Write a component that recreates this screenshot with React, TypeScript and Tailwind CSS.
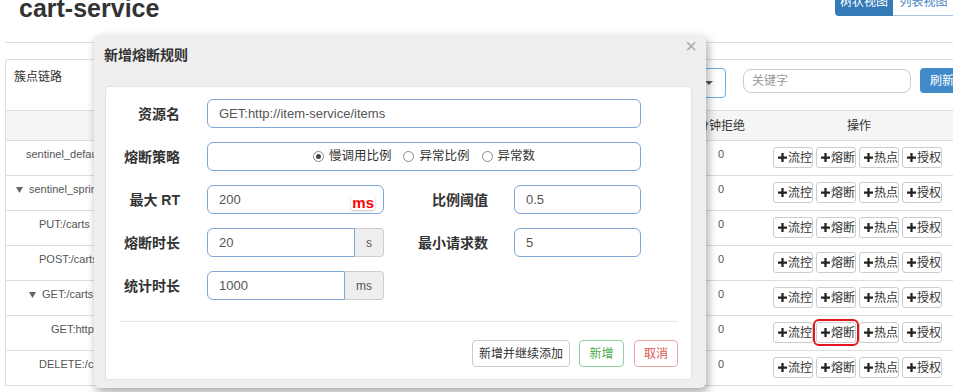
import React from 'react';

type TreeRow = { name: string; indent: string; caret?: boolean; marked?: boolean };

const rows: TreeRow[] = [
  { name: 'sentinel_default_context', indent: 'pl-[20px]' },
  { name: 'sentinel_spring_web_context', indent: 'pl-[10px]', caret: true },
  { name: 'PUT:/carts', indent: 'pl-[33px]' },
  { name: 'POST:/carts', indent: 'pl-[33px]' },
  { name: 'GET:/carts', indent: 'pl-[23px]', caret: true },
  { name: 'GET:http://item-service/items', indent: 'pl-[45px]', marked: true },
  { name: 'DELETE:/carts/{id}', indent: 'pl-[33px]' },
];

const ops = ['流控', '熔断', '热点', '授权'];

const labelCls = 'shrink-0 text-right text-[14px] font-bold leading-[20px] text-[#333]';
const inputCls = 'flex h-[29px] items-center rounded-[6px] border border-[#7ea7d8] bg-white pl-[11px] text-[13px] text-[#555]';
const addonCls = 'flex items-center justify-center rounded-r-[4px] border border-l-0 border-[#ccc] bg-[#eee] text-[12px] text-[#555]';

function Plus() {
  return (
    <svg width="9" height="9" viewBox="0 0 8 8" className="shrink-0">
      <path d="M3 0h2v3h3v2H5v3H3V5H0V3h3z" fill="#222" />
    </svg>
  );
}

function Caret() {
  return (
    <svg width="7" height="6" viewBox="0 0 7 6" className="mr-[6px] shrink-0">
      <path d="M0 0h7L3.5 6z" fill="#666" />
    </svg>
  );
}

function OpButton({ label, marked }: { label: string; marked?: boolean }) {
  return (
    <div
      className={`flex h-[21px] w-[40px] shrink-0 items-center gap-[1px] rounded-[3px] border border-[#ccc] bg-white pl-[4px] text-[12px] leading-none text-[#333] ${
        marked ? 'outline-2 outline-offset-[1px] outline-[#e3141b]' : ''
      }`}
    >
      <Plus />
      <span>{label}</span>
    </div>
  );
}

function Radio({ label, checked }: { label: string; checked?: boolean }) {
  return (
    <span className="flex items-center gap-[5px]">
      <span className="flex h-[11px] w-[11px] items-center justify-center rounded-full border border-[#888] bg-white">
        {checked && <span className="h-[5px] w-[5px] rounded-full bg-[#444]" />}
      </span>
      <span>{label}</span>
    </span>
  );
}

export default function App() {
  return (
    <div className="relative h-[392px] w-[953px] overflow-hidden bg-white font-['Liberation_Sans','Noto_Sans_CJK_SC',sans-serif]">
      {/* page header */}
      <div className="flex h-[42px] items-start justify-between">
        <h1 className="ml-[19px] -mt-[4px] text-[25px] font-bold leading-[25px] text-[#333]">cart-service</h1>
        <div className="-mr-[2px] -mt-[12px] flex h-[28px] text-[12px]">
          <div className="flex w-[58px] items-center justify-center rounded-bl-[4px] bg-[#337ab7] text-white">树状视图</div>
          <div className="flex w-[62px] items-center justify-center border border-l-0 border-[#a9c4e2] text-[#4a86c5]">列表视图</div>
        </div>
      </div>

      {/* background panel */}
      <div className="ml-[5px] border-t border-[#ddd] pt-[16px]">
        <div className="w-[1000px] rounded-tl-[4px] border-l border-t border-[#ddd]">
          <div className="flex h-[50px] items-start">
            <div className="w-[599px] shrink-0 pl-[8px] pt-[8px] text-[12px] leading-[18px] text-[#333]">簇点链路</div>
            <div className="mt-[8px] flex h-[30px] w-[121px] shrink-0 items-center justify-end rounded-[4px] border border-[#66afe9] pr-[12px]">
              <svg width="8" height="4" viewBox="0 0 8 4">
                <path d="M0 0h8L4 4z" fill="#555" />
              </svg>
            </div>
            <div className="ml-[17px] mt-[9px] flex h-[24px] w-[168px] shrink-0 items-center rounded-[8px] border border-[#ccc] pl-[8px] text-[12px] text-[#999]">
              关键字
            </div>
            <div className="ml-[9px] mt-[8px] flex h-[25px] w-[50px] shrink-0 items-center rounded-l-[4px] bg-[#428bca] pl-[10px] text-[12px] text-white">
              刷新
            </div>
          </div>

          <div className="flex h-[31px] items-center border-y border-[#ddd] bg-[#f5f5f5] text-[12px] text-[#333]">
            <div className="w-[675px] shrink-0" />
            <div className="w-[80px] shrink-0 text-center">分钟拒绝</div>
            <div className="w-[196px] shrink-0 text-center">操作</div>
          </div>

          {rows.map((r) => (
            <div key={r.name} className="flex h-[35px] items-start border-b border-[#ddd]">
              <div className={`flex w-[675px] shrink-0 items-center whitespace-nowrap pt-[6px] text-[11px] leading-[15px] text-[#555] ${r.indent}`}>
                {r.caret && <Caret />}
                <span>{r.name}</span>
              </div>
              <div className="w-[80px] shrink-0 pt-[6px] text-center text-[11px] leading-[15px] text-[#555]">0</div>
              <div className="flex w-[196px] shrink-0 gap-[3px] pl-[12px] pt-[6px]">
                {ops.map((o) => (
                  <OpButton key={o} label={o} marked={r.marked && o === '熔断'} />
                ))}
              </div>
            </div>
          ))}
        </div>
      </div>

      {/* modal */}
      <div className="absolute left-[94px] top-[35px] h-[353px] w-[612px] rounded-[6px] bg-[#efefef] shadow-[2px_4px_10px_rgba(0,0,0,0.35)]">
        <div className="flex h-[51px] pl-[10px] pr-[9px]">
          <h4 className="pt-[10px] text-[14px] font-bold leading-[20px] text-[#333]">新增熔断规则</h4>
          <span className="ml-auto mt-[1px] text-[20px] leading-[20px] text-[#aaa]">×</span>
        </div>

        <div className="ml-[11px] h-[294px] w-[587px] rounded-[4px] border border-[#e3e3e3] bg-white pt-[12px]">
          <div className="flex flex-col gap-[14px]">
            <div className="flex h-[29px] items-center">
              <label className={`${labelCls} w-[74px]`}>资源名</label>
              <div className={`${inputCls} ml-[27px] w-[434px]`}>GET:http://item-service/items</div>
            </div>

            <div className="flex h-[29px] items-center">
              <label className={`${labelCls} w-[74px]`}>熔断策略</label>
              <div className="ml-[27px] flex h-[29px] w-[434px] items-center justify-center gap-[12px] rounded-[6px] border border-[#7ea7d8] text-[12.5px] text-[#333]">
                <Radio checked label="慢调用比例" />
                <Radio label="异常比例" />
                <Radio label="异常数" />
              </div>
            </div>

            <div className="flex h-[29px] items-center">
              <label className={`${labelCls} w-[74px]`}>最大 RT</label>
              <div className={`${inputCls} relative ml-[27px] w-[177px]`}>
                200
                <span className="absolute right-[8px] top-[9px] rounded-[3px] px-[1px] text-[15px] font-bold leading-[15px] text-[#f00] shadow-[0_1px_2px_rgba(0,0,0,0.25)]">
                  ms
                </span>
              </div>
              <label className={`${labelCls} w-[104px]`}>比例阈值</label>
              <div className={`${inputCls} ml-[26px] w-[127px]`}>0.5</div>
            </div>

            <div className="flex h-[29px] items-center">
              <label className={`${labelCls} w-[74px]`}>熔断时长</label>
              <div className="ml-[27px] flex h-[29px] w-[177px]">
                <div className="flex flex-1 items-center rounded-l-[6px] border border-[#7ea7d8] pl-[11px] text-[13px] text-[#555]">20</div>
                <div className={`${addonCls} w-[29px]`}>s</div>
              </div>
              <label className={`${labelCls} w-[104px]`}>最小请求数</label>
              <div className={`${inputCls} ml-[26px] w-[127px]`}>5</div>
            </div>

            <div className="flex h-[29px] items-center">
              <label className={`${labelCls} w-[74px]`}>统计时长</label>
              <div className="ml-[27px] flex h-[29px] w-[177px]">
                <div className="flex flex-1 items-center rounded-l-[6px] border border-[#7ea7d8] pl-[11px] text-[13px] text-[#555]">1000</div>
                <div className={`${addonCls} w-[39px]`}>ms</div>
              </div>
            </div>
          </div>

          <div className="mx-[13px] mt-[21px] flex justify-end border-t border-[#e5e5e5] pt-[18px] text-[12px]">
            <button className="h-[27px] w-[98px] rounded-[4px] border border-[#ccc] bg-white text-[#333]">新增并继续添加</button>
            <button className="ml-[9px] h-[27px] w-[45px] rounded-[4px] border border-[#8fd19e] bg-white text-[#4cae4c]">新增</button>
            <button className="ml-[10px] h-[27px] w-[44px] rounded-[4px] border border-[#eba5a9] bg-white text-[#d9534f]">取消</button>
          </div>
        </div>
      </div>
    </div>
  );
}
